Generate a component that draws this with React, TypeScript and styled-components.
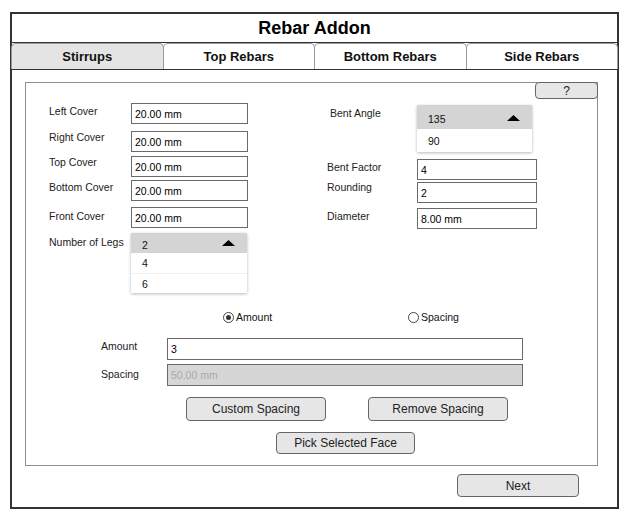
import React from "react";
import styled, { createGlobalStyle } from "styled-components";

const GlobalStyle = createGlobalStyle`
  html, body { margin: 0; padding: 0; background: #fff; }
  body { font-family: "Liberation Sans", Arial, sans-serif; color: #1a1a1a; }
  * { box-sizing: border-box; }
`;

const Frame = styled.div`
  margin: 12px 0 0 10px;
  width: 609px;
  height: 497px;
  border: 2px solid #333;
  display: flex;
  flex-direction: column;
  background: #fff;
`;

const TitleBar = styled.div`
  height: 29px;
  border-bottom: 1px solid #333;
  display: flex;
  align-items: center;
  justify-content: center;
  font-weight: bold;
  font-size: 18px;
  color: #000;
`;

const TabBar = styled.div`
  height: 27px;
  display: flex;
  border-bottom: 1px solid #333;
  margin: 0 -1px;
`;

const Tab = styled.div<{ $active?: boolean }>`
  flex: 1;
  display: flex;
  align-items: center;
  justify-content: center;
  padding-bottom: 1px;
  font-size: 13px;
  font-weight: bold;
  color: #111;
  border: 1px solid #9a9a9a;
  border-bottom: none;
  border-radius: 5px 5px 0 0;
  background: ${(p) => (p.$active ? "#e4e4e4" : "#fff")};
  & + & {
    margin-left: -1px;
  }
`;

const Body = styled.div`
  flex: 1;
  display: flex;
  flex-direction: column;
  padding: 12px 19px 0 13px;
`;

const Panel = styled.div`
  height: 384px;
  border: 1px solid #8f8f8f;
  display: flex;
  flex-direction: column;
`;

const HelpRow = styled.div`
  display: flex;
  justify-content: flex-end;
  margin: -1px -1px 0 0;
`;

const Button = styled.button<{ $w: number; $h: number }>`
  width: ${(p) => p.$w}px;
  height: ${(p) => p.$h}px;
  padding: 0;
  background: #e6e6e6;
  border: 1px solid #666;
  border-radius: 4px;
  font-family: "Liberation Sans", Arial, sans-serif;
  font-size: 12px;
  color: #222;
  line-height: 1;
`;

const TopSection = styled.div`
  display: flex;
  margin-top: 4px;
  padding-left: 23px;
  align-items: flex-start;
`;

const Column = styled.div<{ $ml?: number }>`
  display: flex;
  flex-direction: column;
  margin-left: ${(p) => p.$ml ?? 0}px;
`;

const FieldRow = styled.div<{ $mt?: number; $pl?: number }>`
  display: flex;
  align-items: flex-start;
  margin-top: ${(p) => p.$mt ?? 0}px;
  padding-left: ${(p) => p.$pl ?? 0}px;
`;

const FieldLabel = styled.div<{ $w: number; $dy?: number; $dx?: number }>`
  width: ${(p) => p.$w}px;
  padding-left: ${(p) => p.$dx ?? 0}px;
  margin-top: ${(p) => p.$dy ?? 0}px;
  font-size: 10.5px;
  line-height: 13px;
  color: #222;
  white-space: nowrap;
`;

const TextBox = styled.input<{ $w: number; $h?: number }>`
  width: ${(p) => p.$w}px;
  height: ${(p) => p.$h ?? 21}px;
  margin: 0;
  padding: 0 3px;
  border: 1px solid #6a6a6a;
  border-radius: 0;
  background: #fff;
  font-family: "Liberation Sans", Arial, sans-serif;
  font-size: 10.5px;
  color: #000;
  outline: none;
  &:disabled {
    background: #d6d6d6;
    color: #a9a9a9;
  }
`;

const Dropdown = styled.div<{ $w: number }>`
  width: ${(p) => p.$w}px;
  background: #fff;
  box-shadow: 0 1px 3px rgba(0, 0, 0, 0.28);
  display: flex;
  flex-direction: column;
`;

const DropHeader = styled.div<{ $h: number }>`
  height: ${(p) => p.$h}px;
  background: #d4d4d4;
  display: flex;
  align-items: center;
  justify-content: space-between;
  padding: 0 12px 0 11px;
  font-size: 10.5px;
  color: #111;
`;

const DropText = styled.span`
  padding-top: 3px;
`;

const DropItem = styled.div<{ $h: number }>`
  height: ${(p) => p.$h}px;
  display: flex;
  align-items: center;
  padding-left: 11px;
  font-size: 10.5px;
  color: #111;
  & + & {
    border-top: 1px solid #efefef;
  }
`;

const Arrow = styled.svg<{ $dy?: number }>`
  width: 13px;
  height: 6px;
  margin-top: ${(p) => p.$dy ?? 0}px;
  display: block;
`;

const RadioRow = styled.div`
  display: grid;
  grid-template-columns: 185px auto;
  margin-top: 18px;
  padding-left: 197px;
  height: 13px;
`;

const RadioOption = styled.label`
  display: flex;
  align-items: center;
  gap: 2px;
  font-size: 10.5px;
  line-height: 13px;
  color: #111;
`;

const RadioCircle = styled.span<{ $checked?: boolean }>`
  width: 11px;
  height: 11px;
  border-radius: 50%;
  border: 1px solid #444;
  display: inline-flex;
  align-items: center;
  justify-content: center;
  &::after {
    content: "";
    width: 5px;
    height: 5px;
    border-radius: 50%;
    background: #333;
    display: ${(p) => (p.$checked ? "block" : "none")};
  }
`;

const ButtonRow = styled.div<{ $mt: number; $pl: number }>`
  display: flex;
  gap: 42px;
  margin-top: ${(p) => p.$mt}px;
  padding-left: ${(p) => p.$pl}px;
`;

const Footer = styled.div`
  display: flex;
  justify-content: flex-end;
  margin-top: 8px;
  padding-right: 19px;
`;

const UpArrow = ({ dy }: { dy?: number }) => (
  <Arrow $dy={dy} viewBox="0 0 13 6">
    <polygon points="6.5,0 13,6 0,6" fill="#000" />
  </Arrow>
);

const leftFields = [
  { label: "Left Cover", mt: 0, dy: 2 },
  { label: "Right Cover", mt: 7, dy: 0 },
  { label: "Top Cover", mt: 4, dy: 0 },
  { label: "Bottom Cover", mt: 3, dy: 1 },
  { label: "Front Cover", mt: 6, dy: 3 },
];

const rightFields = [
  { label: "Bent Factor", value: "4", mt: 7, dy: 2 },
  { label: "Rounding", value: "2", mt: 2, dy: -1 },
  { label: "Diameter", value: "8.00 mm", mt: 5, dy: 2 },
];

export default function App() {
  return (
    <>
      <GlobalStyle />
      <Frame>
        <TitleBar>Rebar Addon</TitleBar>
        <TabBar>
          <Tab $active>Stirrups</Tab>
          <Tab>Top Rebars</Tab>
          <Tab>Bottom Rebars</Tab>
          <Tab>Side Rebars</Tab>
        </TabBar>
        <Body>
          <Panel>
            <HelpRow>
              <Button $w={63} $h={17}>?</Button>
            </HelpRow>
            <TopSection>
              <Column>
                {leftFields.map((f) => (
                  <FieldRow key={f.label} $mt={f.mt}>
                    <FieldLabel $w={82} $dy={f.dy}>{f.label}</FieldLabel>
                    <TextBox $w={117} readOnly value="20.00 mm" />
                  </FieldRow>
                ))}
                <FieldRow $mt={5}>
                  <FieldLabel $w={82} $dy={3}>Number of Legs</FieldLabel>
                  <Dropdown $w={116}>
                    <DropHeader $h={20}>
                      <DropText>2</DropText>
                      <UpArrow dy={-1} />
                    </DropHeader>
                    <DropItem $h={20}>4</DropItem>
                    <DropItem $h={20}>6</DropItem>
                  </Dropdown>
                </FieldRow>
              </Column>
              <Column $ml={79}>
                <FieldRow $mt={2}>
                  <FieldLabel $w={90} $dx={3} $dy={2}>Bent Angle</FieldLabel>
                  <Dropdown $w={115}>
                    <DropHeader $h={24}>
                      <DropText>135</DropText>
                      <UpArrow dy={2} />
                    </DropHeader>
                    <DropItem $h={23}>90</DropItem>
                  </Dropdown>
                </FieldRow>
                {rightFields.map((f) => (
                  <FieldRow key={f.label} $mt={f.mt}>
                    <FieldLabel $w={90} $dy={f.dy}>{f.label}</FieldLabel>
                    <TextBox $w={120} readOnly value={f.value} />
                  </FieldRow>
                ))}
              </Column>
            </TopSection>
            <RadioRow>
              <RadioOption>
                <RadioCircle $checked />
                Amount
              </RadioOption>
              <RadioOption>
                <RadioCircle />
                Spacing
              </RadioOption>
            </RadioRow>
            <FieldRow $mt={14} $pl={75}>
              <FieldLabel $w={66} $dy={2}>Amount</FieldLabel>
              <TextBox $w={356} $h={22} readOnly value="3" />
            </FieldRow>
            <FieldRow $mt={4} $pl={75}>
              <FieldLabel $w={66} $dy={4}>Spacing</FieldLabel>
              <TextBox $w={356} $h={22} disabled value="50.00 mm" readOnly />
            </FieldRow>
            <ButtonRow $mt={11} $pl={160}>
              <Button $w={140} $h={24}>Custom Spacing</Button>
              <Button $w={140} $h={24}>Remove Spacing</Button>
            </ButtonRow>
            <ButtonRow $mt={11} $pl={250}>
              <Button $w={139} $h={22}>Pick Selected Face</Button>
            </ButtonRow>
          </Panel>
          <Footer>
            <Button $w={122} $h={23}>Next</Button>
          </Footer>
        </Body>
      </Frame>
    </>
  );
}
